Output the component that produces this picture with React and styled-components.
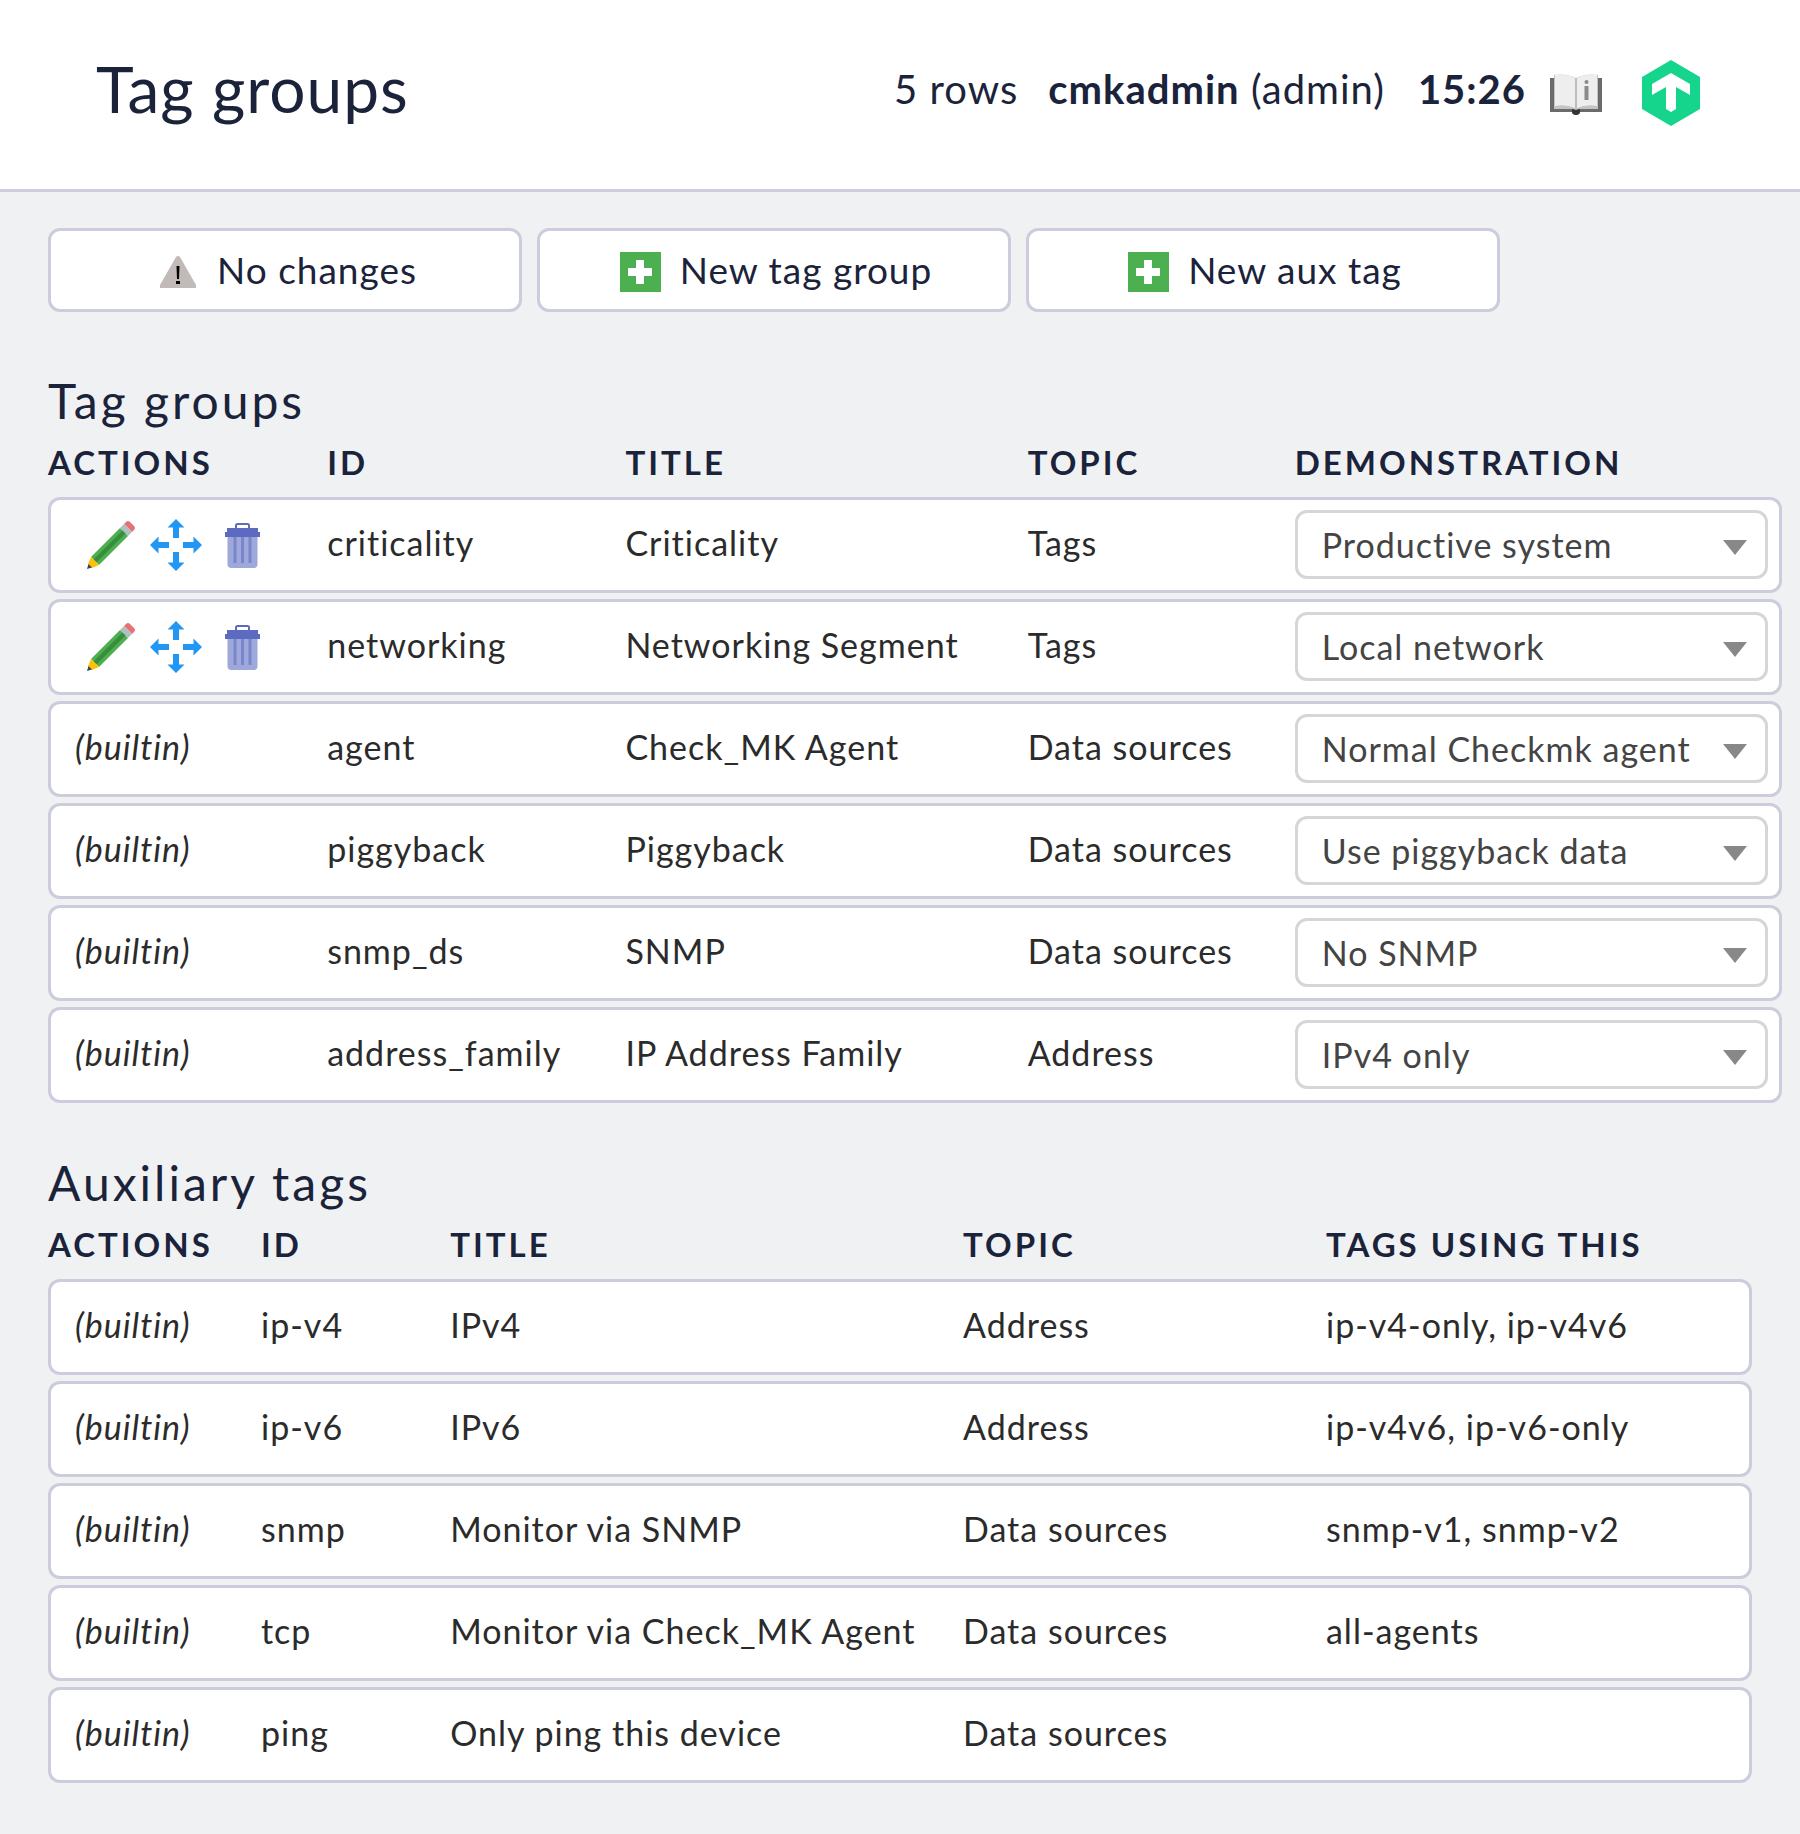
import React from "react";
import styled, { createGlobalStyle, css } from "styled-components";

const color = {
  page: "#f0f1f3",
  surface: "#ffffff",
  line: "#ccccdc",
  ink: "#1b233b",
  cell: "#2b2b2b",
  field: "#444444",
  fieldLine: "#d6d6d6",
  arrow: "#888888",
};

const GlobalStyle = createGlobalStyle`
  *, *::before, *::after { box-sizing: border-box; }
  body {
    margin: 0;
    min-height: 100vh;
    background: ${color.page};
    color: ${color.ink};
    font-family: Lato, "Open Sans", sans-serif;
    font-size: 34px;
    line-height: 40px;
    letter-spacing: 1px;
  }
`;

const Header = styled.header`
  display: flex;
  align-items: center;
  justify-content: space-between;
  padding: 48px 96px 60px;
  background: ${color.surface};
  border-bottom: 3px solid ${color.line};
`;

const PageTitle = styled.h1`
  margin: 0;
  font-size: 64px;
  line-height: 81px;
  font-weight: 400;
`;

const Status = styled.div`
  display: flex;
  align-items: center;
  font-size: 40px;
  line-height: 48px;
`;

const StatusItem = styled.span`
  margin-right: ${(p) => p.$gap}px;
`;

const IconLink = styled.a`
  display: flex;
  padding: 8px 4px 0;

  & + & {
    margin-left: 32px;
  }
`;

const Content = styled.main`
  padding: 36px 48px 48px;
`;

const Toolbar = styled.nav`
  display: flex;
  gap: 15px;
`;

const ToolButton = styled.button`
  display: flex;
  flex: 0 1 474px;
  align-items: center;
  justify-content: center;
  gap: 18px;
  height: 84px;
  padding: 0 0 0 4px;
  border: 3px solid ${color.line};
  border-radius: 12px;
  background: ${color.surface};
  color: inherit;
  font: inherit;
  font-size: 37px;
  letter-spacing: inherit;
  cursor: pointer;
`;

const SectionTitle = styled.h2`
  margin: ${(p) => (p.$first ? 59 : 44)}px 0 0;
  font-size: 48px;
  line-height: 60px;
  font-weight: 400;
  letter-spacing: 3px;
`;

const Table = styled.table`
  width: calc(100% + ${(p) => p.$bleed || 0}px);
  table-layout: fixed;
  border-collapse: separate;
  border-spacing: 0 6px;
`;

const Col = styled.col`
  width: ${(p) => p.$share}%;
`;

const HeadCell = styled.th`
  height: 54px;
  padding: 0 0 4px;
  text-align: left;
  font-size: 33px;
  font-weight: 700;
  letter-spacing: 3px;
  text-transform: uppercase;
  white-space: nowrap;
`;

const Cell = styled.td`
  height: 96px;
  padding: 0 0 4px;
  background: ${color.surface};
  border: solid ${color.line};
  border-width: 3px 0;
  color: ${color.cell};
  white-space: nowrap;

  &:first-child {
    padding-left: 24px;
    border-left-width: 3px;
    border-radius: 12px 0 0 12px;
  }
  &:last-child {
    border-right-width: 3px;
    border-radius: 0 12px 12px 0;
  }
  ${(p) =>
    p.$field &&
    css`
      padding: 0 11px 1px 0;
    `}
`;

const Actions = styled.div`
  display: flex;
  align-items: center;
  gap: 13px;
  padding: 4px 0 0 10px;
`;

const IconButton = styled.button`
  display: flex;
  padding: 0;
  border: 0;
  background: none;
  cursor: pointer;
`;

const SelectBox = styled.div`
  display: grid;
  align-items: center;

  > * {
    grid-area: 1 / 1;
  }
  > svg {
    justify-self: end;
    margin: 6px 21px 0 0;
    pointer-events: none;
  }
`;

const Select = styled.select`
  appearance: none;
  width: 100%;
  height: 69px;
  padding: 0 56px 0 24px;
  border: 3px solid ${color.fieldLine};
  border-radius: 12px;
  background: ${color.surface};
  color: ${color.field};
  font: inherit;
  letter-spacing: inherit;
`;

const BookIcon = () => (
  <svg width="52" height="46" viewBox="0 -4 52 46" aria-hidden="true">
    <path d="M0 4H52V38H0Z" fill="#6b6b6b" />
    <path d="M22 35H30V38Q30 41 26 41T22 38Z" fill="#333333" />
    <path d="M4 1Q16-1 26 4Q36-1 48 1V35H30Q28 35 26 36Q24 35 22 35H4Z" fill="#c4c4c4" />
    <path d="M5 1Q16-1 25 4V34Q16 30 5 32Z" fill="#eeeeee" />
    <path d="M47 1Q36-1 27 4V34Q36 30 47 32Z" fill="#eeeeee" />
    <path d="M25 4H27V34H25Z" fill="#bdbdbd" />
    <circle cx="36.500" cy="8" r="2" fill="#8a8a8a" />
    <path d="M34.500 12H38.500V26H34.500Z" fill="#8a8a8a" />
  </svg>
);

const LogoIcon = () => (
  <svg width="58" height="66" viewBox="0 0 58 66" aria-hidden="true">
    <path d="M29 0L58 17V49L29 66L0 49V17Z" fill="#15d48c" />
    <path d="M29 13L48 24V35L34 27V49L29 52L24 49V27L10 35V24Z" fill="#fff" />
  </svg>
);

const WarningIcon = () => (
  <svg width="42" height="44" viewBox="0 -4 42 44" aria-hidden="true">
    <path d="M19 5Q21 3 23 5L39 33V36H3V33Z" fill="#c2b9b9" />
    <path d="M19.500 14H22.500L22 27H20ZM19 29H23V32H19Z" fill="#000" />
  </svg>
);

const PlusIcon = () => (
  <svg width="42" height="44" viewBox="0 -4 42 44" aria-hidden="true">
    <path d="M0 0H41V40H0Z" fill="#4caf50" />
    <path d="M16 8H24V16H32V24H24V32H16V24H8V16H16Z" fill="#fff" />
  </svg>
);

const PencilIcon = () => (
  <svg width="52" height="52" viewBox="0 0 52 52" aria-hidden="true">
    <path d="M39 5L41 3Q43 1 45 3L49 7Q51 9 49 11L47 13Z" fill="#e57373" />
    <path d="M35 9L39 5L47 13L43 17Z" fill="#b0bec5" />
    <path d="M6 38L35 9L43 17L14 46Z" fill="#4caf50" />
    <path d="M8.500 40.500L37.500 11.500L40.500 14.500L11.500 43.500Z" fill="#388e3c" />
    <path d="M6 38L14 46L7 49L3 45Z" fill="#ffc107" />
    <path d="M3.500 45L7 48.500L2 50Z" fill="#37474f" />
  </svg>
);

const MoveIcon = () => (
  <svg width="52" height="52" viewBox="0 0 52 52" aria-hidden="true">
    <g fill="#2196f3">
      <path d="M26 0L34.500 8.500H29V19H23V8.500H17.500Z" />
      <path d="M26 52L34.500 43.500H29V33H23V43.500H17.500Z" />
      <path d="M0 26L8.500 17.500V23H19V29H8.500V34.500Z" />
      <path d="M52 26L43.500 17.500V23H33V29H43.500V34.500Z" />
    </g>
  </svg>
);

const TrashIcon = () => (
  <svg width="54" height="52" viewBox="0 0 54 52" aria-hidden="true">
    <path d="M12.500 15H42.500V45Q42.500 49 38.500 49H16.500Q12.500 49 12.500 45Z" fill="#9fa8da" />
    <path d="M18.500 17H21.500V44H18.500ZM26 17H29V44H26ZM33.500 17H36.500V44H33.500Z" fill="#7986cb" />
    <path d="M12 9H43V13H45V18H10V13H12Z" fill="#5c6bc0" />
    <path d="M21 10V6.500Q21 5 22.500 5H32.500Q34 5 34 6.500V10" fill="none" stroke="#5c6bc0" strokeWidth="2" />
  </svg>
);

const ArrowIcon = () => (
  <svg width="24" height="15" viewBox="0 0 24 15" aria-hidden="true">
    <path d="M0 0H24L12 15Z" fill={color.arrow} />
  </svg>
);

const tagGroups = [
  { id: "criticality", title: "Criticality", topic: "Tags", demo: "Productive system", custom: true },
  { id: "networking", title: "Networking Segment", topic: "Tags", demo: "Local network", custom: true },
  { id: "agent", title: "Check_MK Agent", topic: "Data sources", demo: "Normal Checkmk agent" },
  { id: "piggyback", title: "Piggyback", topic: "Data sources", demo: "Use piggyback data" },
  { id: "snmp_ds", title: "SNMP", topic: "Data sources", demo: "No SNMP" },
  { id: "address_family", title: "IP Address Family", topic: "Address", demo: "IPv4 only" },
];

const auxTags = [
  { id: "ip-v4", title: "IPv4", topic: "Address", users: "ip-v4-only, ip-v4v6" },
  { id: "ip-v6", title: "IPv6", topic: "Address", users: "ip-v4v6, ip-v6-only" },
  { id: "snmp", title: "Monitor via SNMP", topic: "Data sources", users: "snmp-v1, snmp-v2" },
  { id: "tcp", title: "Monitor via Check_MK Agent", topic: "Data sources", users: "all-agents" },
  { id: "ping", title: "Only ping this device", topic: "Data sources", users: "" },
];

const TableHead = ({ shares, labels }) => (
  <>
    <colgroup>
      {shares.map((share, i) => (
        <Col key={i} $share={share} />
      ))}
    </colgroup>
    <thead>
      <tr>
        {labels.map((label) => (
          <HeadCell key={label} scope="col">
            {label}
          </HeadCell>
        ))}
      </tr>
    </thead>
  </>
);

const RowActions = ({ id }) => (
  <Actions>
    <IconButton type="button" aria-label={`Edit ${id}`}>
      <PencilIcon />
    </IconButton>
    <IconButton type="button" aria-label={`Move ${id}`}>
      <MoveIcon />
    </IconButton>
    <IconButton type="button" aria-label={`Delete ${id}`}>
      <TrashIcon />
    </IconButton>
  </Actions>
);

export default function App() {
  return (
    <>
      <GlobalStyle />
      <Header>
        <PageTitle>Tag groups</PageTitle>
        <Status>
          <StatusItem $gap={30}>5 rows</StatusItem>
          <StatusItem $gap={33}>
            <b>cmkadmin</b> (admin)
          </StatusItem>
          <StatusItem $gap={20}>
            <b>15:26</b>
          </StatusItem>
          <IconLink href="#manual" aria-label="Manual">
            <BookIcon />
          </IconLink>
          <IconLink href="#home" aria-label="Home">
            <LogoIcon />
          </IconLink>
        </Status>
      </Header>
      <Content>
        <Toolbar>
          <ToolButton type="button">
            <WarningIcon />
            No changes
          </ToolButton>
          <ToolButton type="button">
            <PlusIcon />
            New tag group
          </ToolButton>
          <ToolButton type="button">
            <PlusIcon />
            New aux tag
          </ToolButton>
        </Toolbar>

        <SectionTitle $first>Tag groups</SectionTitle>
        <Table $bleed={30}>
          <TableHead
            shares={[16.1, 17.2, 23.2, 15.4, 28.1]}
            labels={["Actions", "ID", "Title", "Topic", "Demonstration"]}
          />
          <tbody>
            {tagGroups.map((group) => (
              <tr key={group.id}>
                <Cell>{group.custom ? <RowActions id={group.id} /> : <i>(builtin)</i>}</Cell>
                <Cell>{group.id}</Cell>
                <Cell>{group.title}</Cell>
                <Cell>{group.topic}</Cell>
                <Cell $field>
                  <SelectBox>
                    <Select aria-label={`${group.title} demonstration`} defaultValue={group.demo}>
                      <option>{group.demo}</option>
                    </Select>
                    <ArrowIcon />
                  </SelectBox>
                </Cell>
              </tr>
            ))}
          </tbody>
        </Table>

        <SectionTitle>Auxiliary tags</SectionTitle>
        <Table>
          <TableHead
            shares={[12.5, 11.1, 30.1, 21.3, 25]}
            labels={["Actions", "ID", "Title", "Topic", "Tags using this"]}
          />
          <tbody>
            {auxTags.map((tag) => (
              <tr key={tag.id}>
                <Cell>
                  <i>(builtin)</i>
                </Cell>
                <Cell>{tag.id}</Cell>
                <Cell>{tag.title}</Cell>
                <Cell>{tag.topic}</Cell>
                <Cell>{tag.users}</Cell>
              </tr>
            ))}
          </tbody>
        </Table>
      </Content>
    </>
  );
}
